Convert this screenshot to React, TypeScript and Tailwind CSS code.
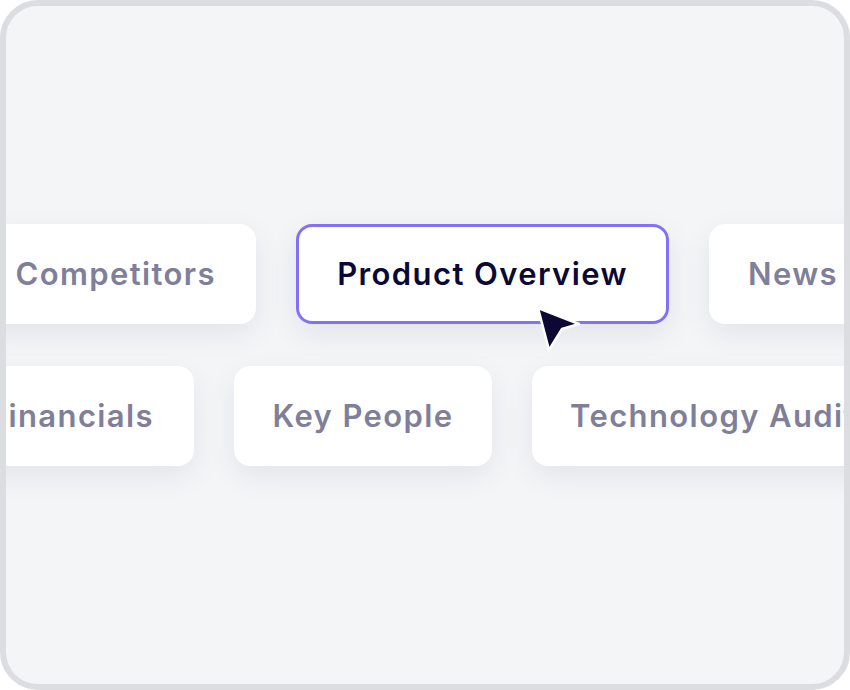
export default function App() {
  const chip =
    "h-[100px] shrink-0 rounded-2xl bg-white flex items-center justify-center text-[31px] font-semibold text-[#7f7f99] shadow-[0_10px_30px_rgba(20,20,50,0.07)] tracking-[0.045em] whitespace-nowrap";

  return (
    <div className="w-[850px] h-[690px] bg-white" style={{ fontFamily: "Inter, 'Noto Sans', sans-serif" }}>
      <div className="w-full h-full border-[6px] border-[#dcdde1] rounded-[38px] bg-[#f4f5f7] overflow-hidden flex flex-col justify-center gap-[42px]">
        {/* row one */}
        <div className="flex gap-[40px] ml-[-38px]">
          <div className={`${chip} w-[288px] justify-end pr-[40px]`}>Competitors</div>
          <div className="relative h-[100px] w-[373px] shrink-0 rounded-2xl bg-white border-[3px] border-[#8470f6] flex items-center justify-center text-[31px] font-semibold text-[#0b0934] shadow-[0_10px_30px_rgba(20,20,50,0.08)] tracking-[0.045em] whitespace-nowrap">
            Product Overview
            <svg
              className="absolute left-[236px] top-[78px]"
              width="46"
              height="48"
              viewBox="0 0 46 48"
            >
              <path
                d="M3 3 L44 19 L27 24 L14 45 Z"
                fill="#0b0934"
                stroke="#ffffff"
                strokeWidth="2.5"
                strokeLinejoin="round"
              />
            </svg>
          </div>
          <div className={`${chip} w-[200px] justify-start pl-[39px]`}>News</div>
        </div>
        {/* row two */}
        <div className="flex gap-[40px] ml-[-48px]">
          <div className={`${chip} w-[236px] justify-end pr-[40px]`}>Financials</div>
          <div className={`${chip} w-[258px]`}>Key People</div>
          <div className={`${chip} w-[360px] justify-start pl-[38px]`}>Technology Audit</div>
        </div>
      </div>
    </div>
  );
}
